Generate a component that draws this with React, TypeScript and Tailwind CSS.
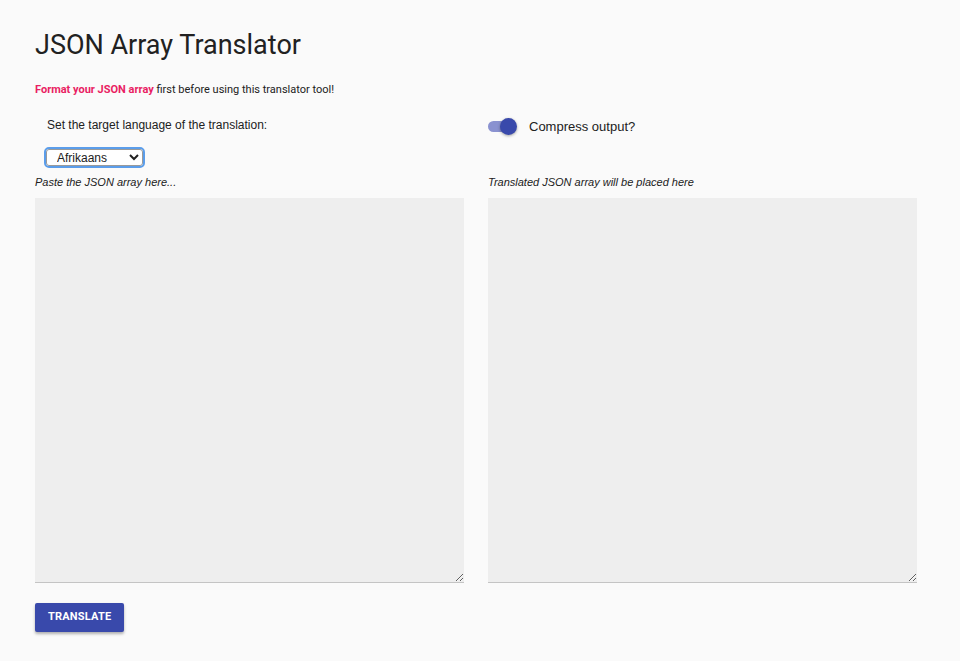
import React, { useState } from "react";

export default function App() {
  const [compress, setCompress] = useState(true);

  return (
    <div className="min-h-[661px] bg-[#fafafa] pl-[35px] pr-[43px] pt-[28px] text-[#212121]">
      <h1 className="font-['Roboto',sans-serif] text-[27px] leading-[34px] font-normal">
        JSON Array Translator
      </h1>
      <p className="mt-[20px] font-['Roboto',sans-serif] text-[11px] leading-[16px]">
        <span className="font-bold text-[#e91e63]">Format your JSON array</span> first before using this translator tool!
      </p>

      <div className="mt-[16px] grid grid-cols-2 gap-x-[24px] font-['Liberation_Sans',Arial,sans-serif]">
        <div>
          <div className="pl-[12px] text-[12px] leading-[20px] pt-[1px]">Set the target language of the translation:</div>
          <div className="mt-[10px] pl-[11px]">
            <select className="h-[17px] w-[97px] rounded-[3px] border border-[#9a9a9a] bg-white px-[6px] text-[12px] leading-[15px] outline outline-2 outline-[#5b9dea]">
              <option>Afrikaans</option>
            </select>
          </div>
        </div>
        <div className="flex items-start">
          <button
            onClick={() => setCompress(!compress)}
            className="relative mt-[3px] h-[18px] w-[30px]"
          >
            <span className="absolute left-0 top-[4px] h-[11px] w-[26px] rounded-full bg-[#8a92d0]" />
            <span
              className={
                compress
                  ? "absolute left-[12px] top-[1px] h-[17px] w-[17px] rounded-full bg-[#3949ab] shadow-[0_1px_3px_rgba(0,0,0,0.35)]"
                  : "absolute left-0 top-[1px] h-[17px] w-[17px] rounded-full bg-[#f5f5f5] shadow-[0_1px_3px_rgba(0,0,0,0.35)]"
              }
            />
          </button>
          <span className="ml-[11px] pt-[1px] text-[13px] leading-[24px]">Compress output?</span>
        </div>
      </div>

      <div className="mt-[6px] grid grid-cols-2 gap-x-[24px] font-['Liberation_Sans',Arial,sans-serif]">
        <div>
          <div className="text-[11px] italic leading-[15px]">Paste the JSON array here...</div>
          <textarea className="mt-[8px] block h-[385px] w-full resize-y border-0 border-b border-[#c4c4c4] bg-[#eeeeee] p-2 text-[12px] outline-none" />
        </div>
        <div>
          <div className="text-[11px] italic leading-[15px]">Translated JSON array will be placed here</div>
          <textarea readOnly className="mt-[8px] block h-[385px] w-full resize-y border-0 border-b border-[#c4c4c4] bg-[#eeeeee] p-2 text-[12px] outline-none" />
        </div>
      </div>

      <button className="mt-[20px] h-[29px] rounded-[2px] bg-[#3949ab] px-[13px] font-['Roboto',sans-serif] text-[11px] font-bold uppercase tracking-[0.2px] text-white shadow-[0_2px_3px_rgba(0,0,0,0.3)]">
        Translate
      </button>
    </div>
  );
}
